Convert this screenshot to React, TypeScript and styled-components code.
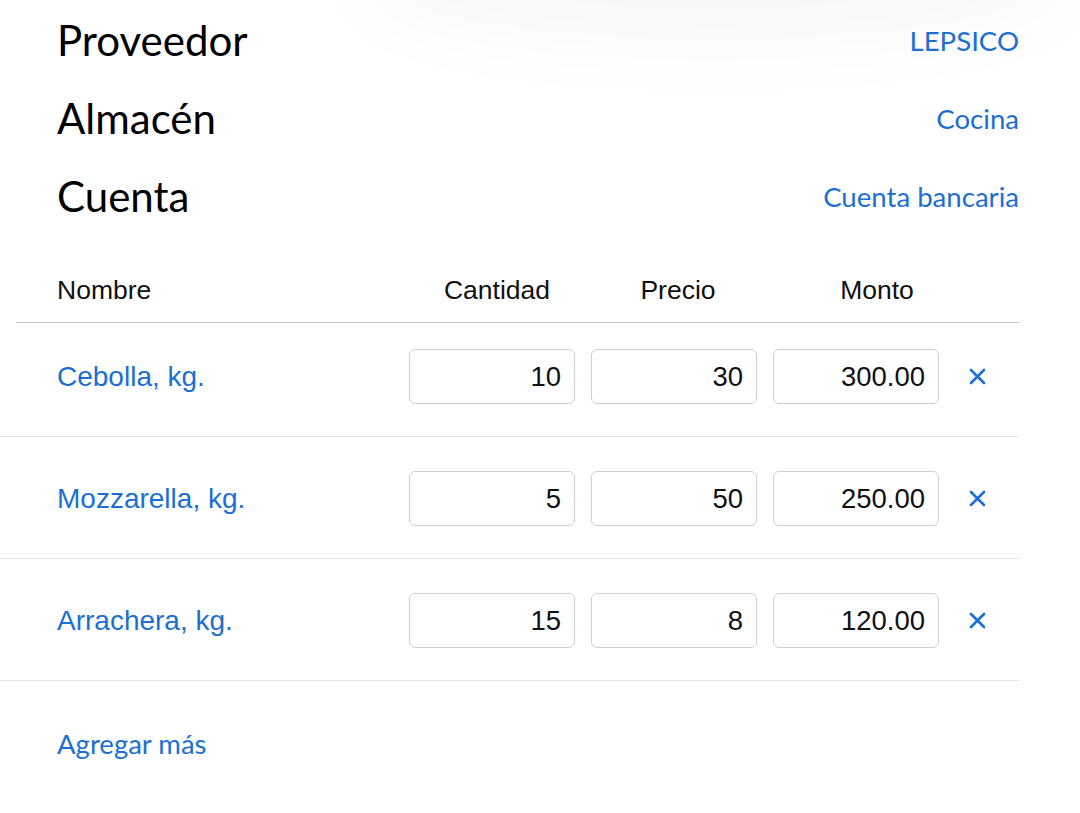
import React from 'react';
import styled, { createGlobalStyle } from 'styled-components';

const GlobalStyle = createGlobalStyle`
  html, body {
    margin: 0;
    padding: 0;
    background: #ffffff;
  }
  body {
    font-family: Lato, "Liberation Sans", sans-serif;
    -webkit-font-smoothing: antialiased;
  }
`;

const BLUE = '#1b6fd3';

type Item = { name: string; qty: string; price: string; amount: string };

const items: Item[] = [
  { name: 'Cebolla, kg.', qty: '10', price: '30', amount: '300.00' },
  { name: 'Mozzarella, kg.', qty: '5', price: '50', amount: '250.00' },
  { name: 'Arrachera, kg.', qty: '15', price: '8', amount: '120.00' },
];

const info = [
  { label: 'Proveedor', value: 'LEPSICO' },
  { label: 'Almacén', value: 'Cocina' },
  { label: 'Cuenta', value: 'Cuenta bancaria' },
];

const CloseIcon = () => (
  <svg width="17" height="17" viewBox="0 0 17 17" fill="none">
    <path d="M2 2 L15 15 M15 2 L2 15" stroke={BLUE} strokeWidth="2.6" strokeLinecap="round" />
  </svg>
);

const App: React.FC = () => {
  return (
    <>
      <GlobalStyle />
      <Page>
        <InfoList>
          {info.map((row) => (
            <InfoRow key={row.label}>
              <Label>{row.label}</Label>
              <Value>{row.value}</Value>
            </InfoRow>
          ))}
        </InfoList>

        <Table>
          <TableHead>
            <HeadCell>Nombre</HeadCell>
            <HeadCell $center>Cantidad</HeadCell>
            <HeadCell $center>Precio</HeadCell>
            <HeadCell $center>Monto</HeadCell>
          </TableHead>

          {items.map((el) => (
            <Row key={el.name}>
              <ItemName>{el.name}</ItemName>
              <NumberBox>{el.qty}</NumberBox>
              <NumberBox>{el.price}</NumberBox>
              <NumberBox>{el.amount}</NumberBox>
              <RemoveButton aria-label="Eliminar">
                <CloseIcon />
              </RemoveButton>
            </Row>
          ))}
        </Table>

        <AddMore>Agregar más</AddMore>
      </Page>
    </>
  );
};

const Page = styled.div`
  position: relative;
  width: 1080px;
  height: 813px;
  overflow: hidden;

  &::before {
    content: '';
    position: absolute;
    top: -80px;
    left: 360px;
    right: 10px;
    height: 130px;
    border-radius: 50%;
    background: rgba(0, 0, 0, 0.028);
    filter: blur(30px);
    pointer-events: none;
  }
`;

const InfoList = styled.div`
  padding: 1px 61px 0 57px;
`;

const InfoRow = styled.div`
  position: relative;
  height: 78px;
  display: flex;
  align-items: center;
  justify-content: space-between;
`;

const Label = styled.span`
  font-family: Lato, sans-serif;
  font-size: 42px;
  color: #000;
`;

const Value = styled.span`
  font-family: Lato, sans-serif;
  font-size: 27.6px;
  color: ${BLUE};
`;

const Table = styled.div`
  width: 1019px;
`;

const TableHead = styled.div`
  display: grid;
  grid-template-columns: 352px 176px 186px 212px 1fr;
  padding: 40px 0 17px 41px;
  margin-left: 16px;
  border-bottom: 1.5px solid #c9c9c9;
`;

const HeadCell = styled.div<{ $center?: boolean }>`
  font-family: "Liberation Sans", Arial, sans-serif;
  font-size: 26.5px;
  line-height: 30px;
  color: #111;
  text-align: ${(p) => (p.$center ? 'center' : 'left')};
`;

const Row = styled.div`
  display: grid;
  grid-template-columns: 1fr 166px 166px 166px 44px;
  column-gap: 16px;
  align-items: center;
  padding: 34px 20px 32px 57px;
  border-bottom: 1.5px solid #e3e3e3;

  &:nth-child(2) {
    padding-top: 26px;
  }
`;

const ItemName = styled.div`
  font-family: "Liberation Sans", Arial, sans-serif;
  font-size: 28px;
  color: ${BLUE};
`;

const NumberBox = styled.div`
  box-sizing: border-box;
  height: 55px;
  display: flex;
  align-items: center;
  justify-content: flex-end;
  padding-right: 13px;
  border: 1.5px solid #d0d0d0;
  border-radius: 6px;
  font-family: "Liberation Sans", Arial, sans-serif;
  font-size: 27.5px;
  color: #111;
`;

const RemoveButton = styled.button`
  display: flex;
  align-items: center;
  justify-content: center;
  padding: 0;
  border: 0;
  background: none;
  height: 40px;
`;

const AddMore = styled.div`
  padding: 46px 0 0 57px;
  font-family: Lato, sans-serif;
  font-size: 27.5px;
  line-height: 34px;
  color: ${BLUE};
`;

export default App;
